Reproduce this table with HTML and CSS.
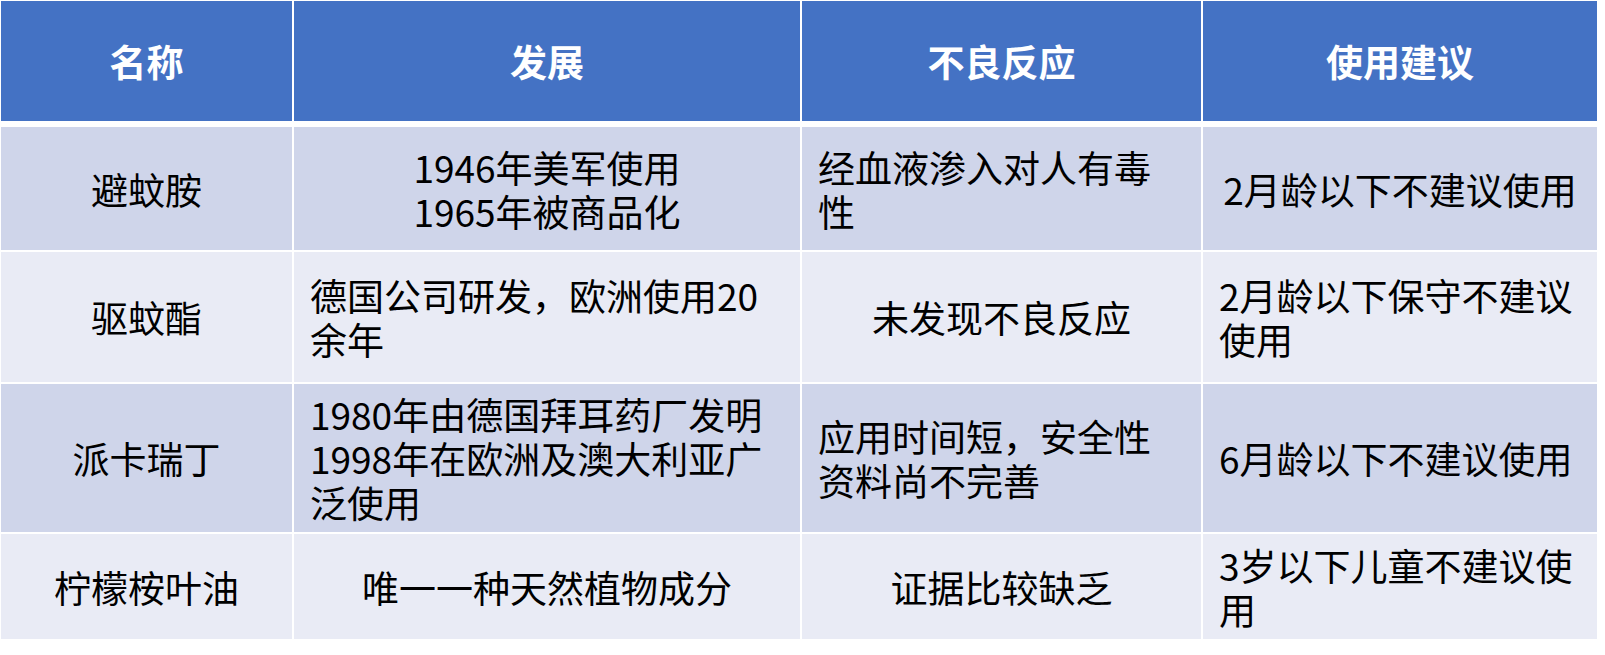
FILE: index.html
```html
<!DOCTYPE html>
<html lang="zh-CN">
<head>
<meta charset="utf-8">
<title>驱蚊成分对比</title>
<link rel="stylesheet" href="styles.css">
</head>
<body>
<table class="grid">
  <colgroup>
    <col class="c-name">
    <col class="c-dev">
    <col class="c-side">
    <col class="c-advice">
  </colgroup>
  <thead>
    <tr class="head">
      <th>名称</th>
      <th>发展</th>
      <th>不良反应</th>
      <th class="last">使用建议</th>
    </tr>
  </thead>
  <tbody>
    <tr class="row odd r1">
      <td>避蚊胺</td>
      <td class="lines">1946年美军使用
1965年被商品化</td>
      <td class="left">经血液渗入对人有毒性</td>
      <td class="last">2月龄以下不建议使用</td>
    </tr>
    <tr class="row even r2">
      <td>驱蚊酯</td>
      <td class="left">德国公司研发，欧洲使用20余年</td>
      <td>未发现不良反应</td>
      <td class="left last">2月龄以下保守不建议使用</td>
    </tr>
    <tr class="row odd r3">
      <td>派卡瑞丁</td>
      <td class="left lines">1980年由德国拜耳药厂发明
1998年在欧洲及澳大利亚广泛使用</td>
      <td class="left">应用时间短，安全性资料尚不完善</td>
      <td class="left last">6月龄以下不建议使用</td>
    </tr>
    <tr class="row even r4 lastrow">
      <td>柠檬桉叶油</td>
      <td>唯一一种天然植物成分</td>
      <td>证据比较缺乏</td>
      <td class="left last">3岁以下儿童不建议使用</td>
    </tr>
  </tbody>
</table>
</body>
</html>
```

FILE: styles.css
```css
html, body {
  margin: 0;
  padding: 0;
  background: #ffffff;
}

body {
  padding: 1px 0 0 1px;
  font-family: "Noto Sans CJK SC", "Noto Sans", "Liberation Sans", sans-serif;
  color: #000000;
}

.grid {
  border-collapse: separate;
  border-spacing: 0;
  table-layout: fixed;
  width: 1596px;
}

.c-name { width: 293px; }
.c-dev { width: 508px; }
.c-side { width: 401px; }
.c-advice { width: 394px; }

.grid th,
.grid td {
  box-sizing: border-box;
  border-right: 2px solid #ffffff;
  border-bottom: 2px solid #ffffff;
  padding: 0 16px;
  font-size: 37px;
  line-height: 44px;
  text-align: center;
  vertical-align: middle;
  word-break: break-all;
}

.grid .last {
  border-right: 0;
}

.head th {
  background: #4472c4;
  color: #ffffff;
  font-weight: 700;
  height: 126px;
  border-bottom-width: 6px;
}

.odd td { background: #cfd5ea; }
.even td { background: #e9ebf5; }

.r1 td { height: 125px; }
.r2 td { height: 132px; }
.r3 td { height: 150px; }
.r4 td { height: 105px; }

.lastrow td { border-bottom: 0; }

.grid td.left {
  text-align: left;
}

.grid td.lines {
  white-space: pre-line;
}
```
